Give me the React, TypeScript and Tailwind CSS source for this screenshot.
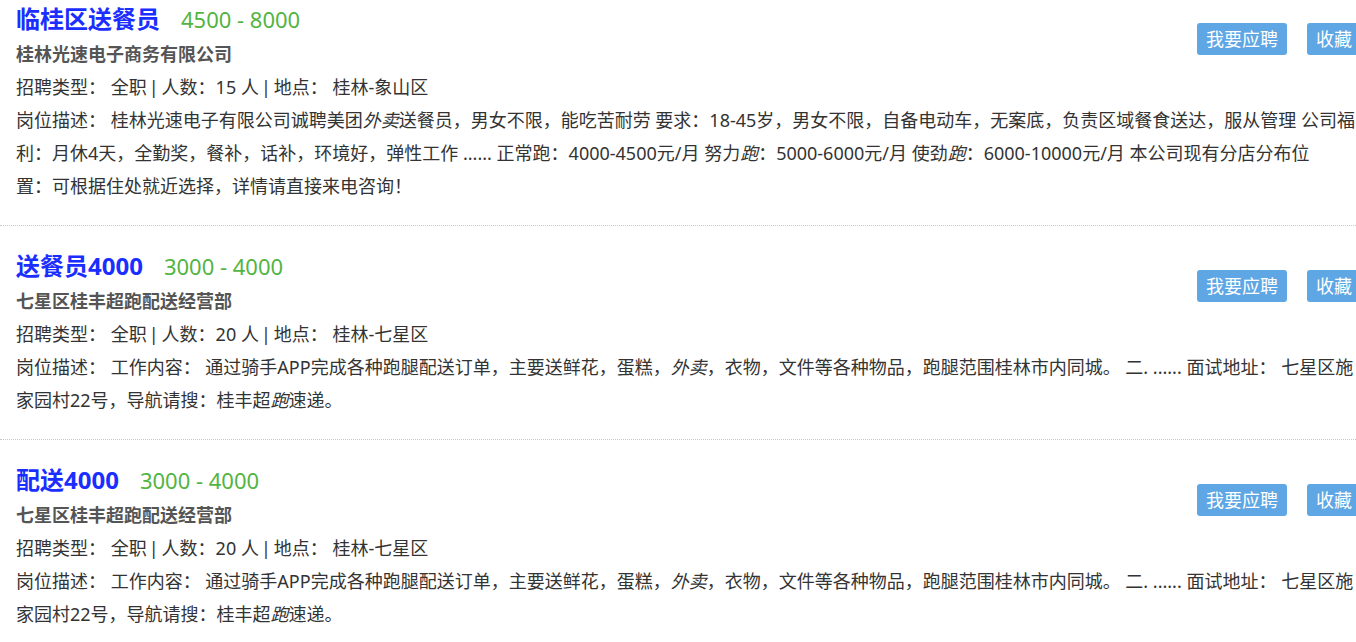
import React from "react";

type Job = {
  title: string;
  salary: string;
  company: string;
  count: string;
  place: string;
  desc: React.ReactNode[];
};

const Em = ({ children }: { children: React.ReactNode }) => <em className="italic">{children}</em>;

const Pipe = () => <span className="ml-[2px] mr-[3px]">|</span>;

const courierDesc: React.ReactNode[] = [
  <>岗位描述： 工作内容： 通过骑手APP完成各种跑腿配送订单，主要送鲜花，蛋糕，<Em>外卖</Em>，衣物，文件等各种物品，跑腿范围桂林市内同城。 二. ...... 面试地址： 七星区施</>,
  <>家园村22号，导航请搜：桂丰超<Em>跑</Em>速递。</>,
];

const jobs: Job[] = [
  {
    title: "临桂区送餐员",
    salary: "4500 - 8000",
    company: "桂林光速电子商务有限公司",
    count: "15",
    place: "桂林-象山区",
    desc: [
      <>岗位描述： 桂林光速电子有限公司诚聘美团<Em>外卖</Em>送餐员，男女不限，能吃苦耐劳 要求：18-45岁，男女不限，自备电动车，无案底，负责区域餐食送达，服从管理 公司福</>,
      <>利：月休4天，全勤奖，餐补，话补，环境好，弹性工作 ...... 正常跑：4000-4500元/月 努力<Em>跑</Em>：5000-6000元/月 使劲<Em>跑</Em>：6000-10000元/月 本公司现有分店分布位</>,
      <>置：可根据住处就近选择，详情请直接来电咨询！</>,
    ],
  },
  {
    title: "送餐员4000",
    salary: "3000 - 4000",
    company: "七星区桂丰超跑配送经营部",
    count: "20",
    place: "桂林-七星区",
    desc: courierDesc,
  },
  {
    title: "配送4000",
    salary: "3000 - 4000",
    company: "七星区桂丰超跑配送经营部",
    count: "20",
    place: "桂林-七星区",
    desc: courierDesc,
  },
];

function JobItem({ job }: { job: Job }) {
  return (
    <div className="border-b border-dotted border-[#c8c8c8] pt-[22px] pb-[22px]">
      <div className="flex pl-4 pr-[19px]">
        <div className="flex-1">
          <div className="flex h-[36px] items-baseline">
            <span className="text-[24px] font-bold leading-[36px] text-[#1a2eff]">{job.title}</span>
            <span className="ml-[21px] text-[22px] leading-[36px] text-[#52b441]">{job.salary}</span>
          </div>
          <div className="h-[34px] text-[18px] font-bold leading-[34px] text-[#555555]">{job.company}</div>
          <div className="h-[33px] whitespace-nowrap text-[18px] leading-[33px] text-[#333333]">
            招聘类型： 全职<Pipe />人数：{job.count} 人<Pipe />地点： {job.place}
          </div>
        </div>
        <div className="flex gap-5 pt-[22px]">
          <button className="h-[32px] rounded-[3px] bg-[#5ea6e4] px-[9px] text-[18px] leading-[32px] text-white">
            我要应聘
          </button>
          <button className="h-[32px] rounded-[3px] bg-[#5ea6e4] px-[9px] text-[18px] leading-[32px] text-white">
            收藏
          </button>
        </div>
      </div>
      <div className="pl-4 text-[18px] leading-[33px] text-[#333333]">
        {job.desc.map((line, i) => (
          <div key={i} className="h-[33px] whitespace-nowrap">
            {line}
          </div>
        ))}
      </div>
    </div>
  );
}

export default function App() {
  return (
    <div className="h-[642px] w-[1356px] overflow-hidden bg-white font-['Noto_Sans','Noto_Sans_CJK_SC',sans-serif]">
      <div className="-mt-[21px] w-[1380px]">
        {jobs.map((job, i) => (
          <JobItem key={i} job={job} />
        ))}
      </div>
    </div>
  );
}
